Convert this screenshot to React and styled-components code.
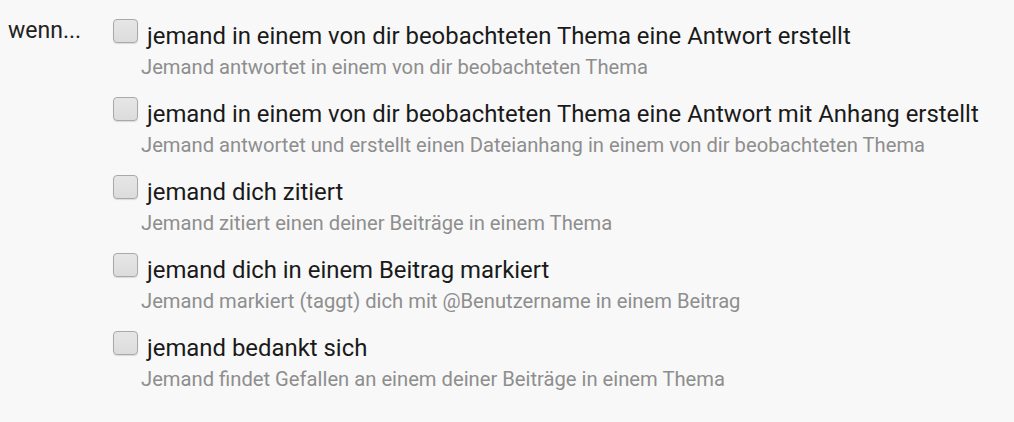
import React from "react";
import styled, { createGlobalStyle } from "styled-components";

const GlobalStyle = createGlobalStyle`
  html, body {
    margin: 0;
    padding: 0;
    background: #f8f8f8;
  }
  body {
    font-family: Roboto, "Liberation Sans", sans-serif;
  }
`;

const Page = styled.div`
  display: flex;
  width: 1014px;
  height: 422px;
  padding: 19px 0 0 8px;
  box-sizing: border-box;
`;

const Label = styled.div`
  width: 105px;
  font-size: 23px;
  color: #222;
  line-height: 24px;
`;

const List = styled.div`
  display: flex;
  flex-direction: column;
  gap: 18px;
`;

const Option = styled.label`
  display: flex;
  flex-direction: column;
`;

const Head = styled.div`
  display: flex;
  align-items: flex-start;
  gap: 9px;
`;

const Box = styled.span`
  width: 25px;
  height: 24px;
  box-sizing: border-box;
  border: 1px solid #a9a9a9;
  border-radius: 4px;
  background: linear-gradient(#e6e6e6, #dcdcdc);
  box-shadow: 0 1px 1px rgba(0, 0, 0, 0.12);
  flex-shrink: 0;
`;

const Title = styled.span`
  margin-top: 2px;
  font-size: 23.9px;
  color: #1a1a1a;
  line-height: 30px;
`;

const Hint = styled.span`
  margin-top: 4px;
  font-size: 20.2px;
  color: #8e8e8e;
  line-height: 24px;
  padding-left: 28px;
`;

const options = [
  {
    title: "jemand in einem von dir beobachteten Thema eine Antwort erstellt",
    hint: "Jemand antwortet in einem von dir beobachteten Thema",
  },
  {
    title: "jemand in einem von dir beobachteten Thema eine Antwort mit Anhang erstellt",
    hint: "Jemand antwortet und erstellt einen Dateianhang in einem von dir beobachteten Thema",
  },
  {
    title: "jemand dich zitiert",
    hint: "Jemand zitiert einen deiner Beiträge in einem Thema",
  },
  {
    title: "jemand dich in einem Beitrag markiert",
    hint: "Jemand markiert (taggt) dich mit @Benutzername in einem Beitrag",
  },
  {
    title: "jemand bedankt sich",
    hint: "Jemand findet Gefallen an einem deiner Beiträge in einem Thema",
  },
];

const App = () => {
  return (
    <>
      <GlobalStyle />
      <Page>
        <Label>wenn...</Label>
        <List>
          {options.map((o) => (
            <Option key={o.title}>
              <Head>
                <Box />
                <Title>{o.title}</Title>
              </Head>
              <Hint>{o.hint}</Hint>
            </Option>
          ))}
        </List>
      </Page>
    </>
  );
};

export default App;
